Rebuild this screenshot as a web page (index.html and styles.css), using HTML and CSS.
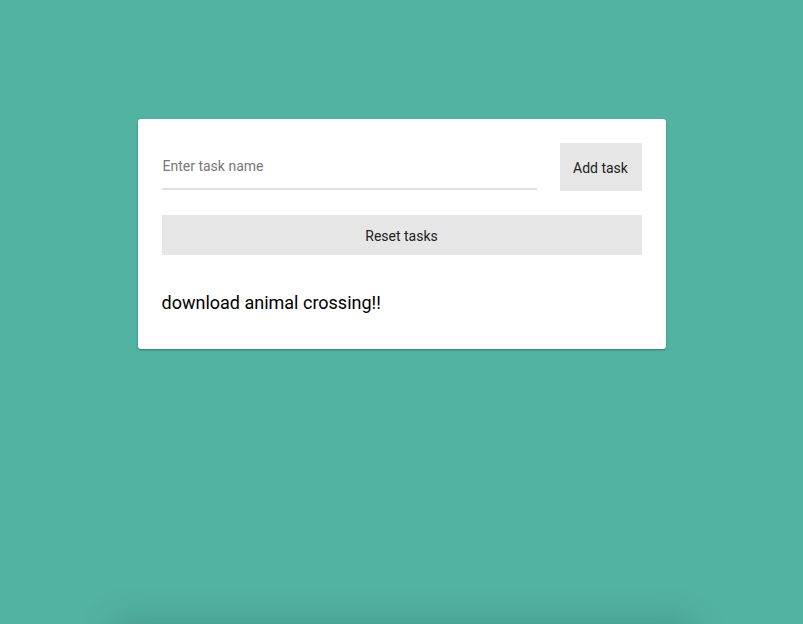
FILE: index.html
```html
<!DOCTYPE html>
<html>
<head>
<meta charset="utf-8">
<link rel="stylesheet" href="styles.css">
</head>
<body>
<div class="page">
  <div class="card">
    <div class="form-row">
      <div class="field">
        <input class="task-input" type="text" placeholder="Enter task name">
      </div>
      <button class="btn add-btn">Add task</button>
    </div>
    <button class="btn reset-btn">Reset tasks</button>
    <ul class="tasks">
      <li class="task">download animal crossing!!</li>
    </ul>
  </div>
  <div class="next-card"></div>
</div>
</body>
</html>
```
FILE: styles.css
```css
html, body {
  margin: 0;
  padding: 0;
  height: 100%;
  overflow: hidden;
}
body {
  background: #52b3a2;
  font-family: Roboto, "Liberation Sans", sans-serif;
}
.page {
  display: flex;
  flex-direction: column;
  align-items: center;
  padding-top: 119px;
}
.card {
  box-sizing: border-box;
  width: 528px;
  background: #fff;
  border-radius: 3px;
  box-shadow: 0 1px 3px rgba(0,0,0,0.2), 0 1px 1px rgba(0,0,0,0.14);
  padding: 24px 24px 0 24px;
  height: 230px;
}
.form-row {
  display: flex;
  align-items: flex-start;
  gap: 23px;
}
.field {
  flex: 1;
}
.task-input {
  display: block;
  box-sizing: border-box;
  width: 100%;
  height: 47px;
  border: none;
  border-bottom: 2px solid #e0e0e0;
  outline: none;
  padding: 0 0 0 1px;
  margin: 0;
  font-family: Roboto, "Liberation Sans", sans-serif;
  font-size: 14px;
  color: #333;
  background: transparent;
}
.task-input::placeholder {
  color: #777;
}
.btn {
  border: none;
  background: #e6e6e6;
  font-family: Roboto, "Liberation Sans", sans-serif;
  font-size: 14px;
  color: #222;
  margin: 0;
  cursor: pointer;
}
.add-btn {
  width: 82px;
  height: 48px;
  padding: 0;
  line-height: 48px;
  padding-top: 1px;
}
.reset-btn {
  display: block;
  width: 100%;
  height: 40px;
  margin-top: 24px;
  padding: 2px 0 0 0;
}
.tasks {
  list-style: none;
  margin: 36px 0 0 0;
  padding: 0;
}
.task {
  font-size: 18px;
  color: #000;
  line-height: 24px;
}
.next-card {
  margin-top: 282px;
  width: 570px;
  height: 200px;
  background: #52b3a2;
  border-radius: 4px;
  box-shadow: 0 -4px 36px 8px rgba(0,0,0,0.13);
}
```
